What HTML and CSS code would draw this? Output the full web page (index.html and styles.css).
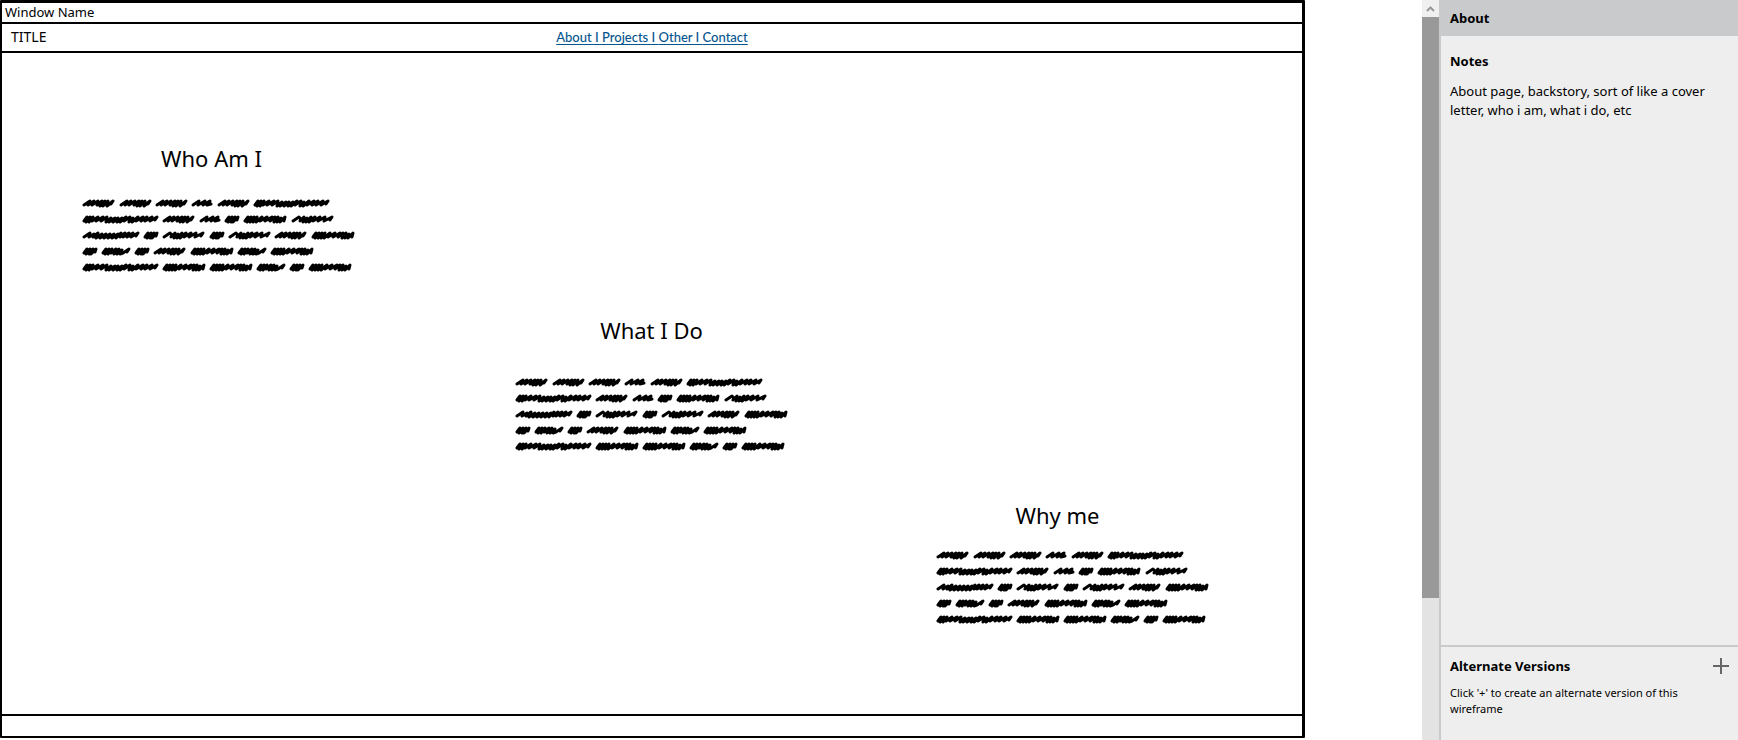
FILE: index.html
```
<!DOCTYPE html>
<html lang="en">
<head>
<meta charset="utf-8">
<title>About</title>
<link rel="stylesheet" href="styles.css">
</head>
<body>
<svg class="defs" aria-hidden="true">
  <defs>
    <path id="w15" d="M2 6 5 2 4 7 8 2 7 7 11 2 9 7 14 2 13 5"/>
    <path id="w21" d="M2 6 8 2 7 6 14 2 12 6 19 2 16 6 20 5"/>
    <path id="w29" d="M2 6 5 2 4 7 8 2 7 7 11 2 10 6 15 2 13 7 18 2 16 7 21 3 19 7 22 6 28 2 26 5"/>
    <path id="w32" d="M2 6 8 2 6 6 12 2 10 6 16 2 15 6 20 2 18 7 23 2 21 7 26 2 25 7 31 2 29 5"/>
    <path id="w42" d="M2 6 8 2 10 4 9 6 13 2 12 7 16 3 15 7 20 2 18 7 24 2 22 6 29 2 27 6 34 2 33 6 41 2 39 5"/>
    <path id="w43" d="M2 6 5 2 4 7 8 2 7 7 11 2 10 7 14 2 13 7 19 2 17 6 24 2 22 6 29 2 27 6 32 2 31 7 35 2 34 7 38 3 37 7 42 2 41 6"/>
    <path id="w57" d="M2 6 8 2 7 6 12 3 11 6 16 2 14 7 20 3 18 7 24 3 22 7 28 3 26 7 32 3 30 7 36 3 34 7 39 2 38 6 43 2 41 6 47 2 45 6 51 2 49 6 56 2 54 5"/>
    <path id="w76" d="M2 6 5 2 4 7 8 2 7 7 11 2 10 6 16 2 14 6 21 2 19 6 25 2 24 7 29 3 27 7 33 3 31 7 36 3 35 7 40 3 38 7 44 2 42 6 48 2 47 7 51 3 50 7 56 2 54 6 61 2 59 6 65 2 63 6 70 2 68 6 75 2 73 5"/>
    <g id="scribble">
      <g transform="translate(0 4)"><use href="#w32"/><use href="#w32" x="37"/><use href="#w32" x="73"/><use href="#w21" x="109"/><use href="#w32" x="135"/><use href="#w76" x="171"/></g>
      <g transform="translate(0 20)"><use href="#w76"/><use href="#w32" x="80"/><use href="#w21" x="117"/><use href="#w15" x="142"/><use href="#w43" x="161"/><use href="#w42" x="209"/></g>
      <g transform="translate(0 36)"><use href="#w57"/><use href="#w15" x="61"/><use href="#w42" x="80"/><use href="#w15" x="127"/><use href="#w42" x="146"/><use href="#w32" x="192"/><use href="#w43" x="229"/></g>
      <g transform="translate(0 52)"><use href="#w15"/><use href="#w29" x="19"/><use href="#w15" x="52"/><use href="#w32" x="71"/><use href="#w43" x="108"/><use href="#w29" x="155"/><use href="#w43" x="188"/></g>
      <g transform="translate(0 68)"><use href="#w76"/><use href="#w43" x="80"/><use href="#w43" x="127"/><use href="#w29" x="174"/><use href="#w15" x="207"/><use href="#w43" x="226"/></g>
    </g>
  </defs>
</svg>
<div class="app">
  <main class="canvas">
    <div class="window">
      <div class="window-name">Window Name</div>
      <header class="header">
        <span class="site-title">TITLE</span>
        <nav class="links"><a href="#about">About I </a><a href="#projects">Projects I </a><a href="#other">Other I </a><a href="#contact">Contact</a></nav>
      </header>
      <div class="content">
        <section class="block who" id="about">
          <h2>Who Am I</h2>
          <svg class="lines" viewBox="0 0 273 80" role="img" aria-label="Placeholder text"><use href="#scribble"/></svg>
        </section>
        <section class="block what">
          <h2>What I Do</h2>
          <svg class="lines" viewBox="0 0 273 80" role="img" aria-label="Placeholder text"><use href="#scribble"/></svg>
        </section>
        <section class="block why">
          <h2>Why me</h2>
          <svg class="lines" viewBox="0 0 273 80" role="img" aria-label="Placeholder text"><use href="#scribble"/></svg>
        </section>
      </div>
      <footer class="footer"></footer>
    </div>
  </main>
  <div class="scrollbar">
    <button class="scroll-up" aria-label="Scroll up"><svg width="9" height="6" viewBox="0 0 9 6"><path d="M1 5 4.500 1.500 8 5"/></svg></button>
    <div class="thumb"></div>
  </div>
  <aside class="sidebar">
    <h1 class="name">About</h1>
    <section class="notes">
      <h3>Notes</h3>
      <p>About page, backstory, sort of like a cover letter, who i am, what i do, etc</p>
    </section>
    <section class="versions">
      <div class="versions-head">
        <h3>Alternate Versions</h3>
        <button class="add" aria-label="Add alternate version"><svg width="16" height="16" viewBox="0 0 16 16"><path d="M8 0V16M0 8H16"/></svg></button>
      </div>
      <p>Click '+' to create an alternate version of this wireframe</p>
    </section>
  </aside>
</div>
</body>
</html>
```
FILE: styles.css
```
* { box-sizing: border-box; }
body { margin: 0; background: #fff; color: #000; font-family: "Noto Sans", sans-serif; }
h1, h2, h3, p { margin: 0; }
button { border: 0; padding: 0; background: none; display: flex; align-items: center; justify-content: center; }
.defs { position: absolute; width: 0; height: 0; }
.app { display: flex; min-height: 100vh; }

.canvas { flex: 1; display: flex; padding: 0 117px 2px 0; }
.window { flex: 1; display: flex; flex-direction: column; border: 2px solid #000; border-top-width: 3px; border-right-width: 3px; border-radius: 1px; }
.window-name { height: 21px; padding-left: 3px; border-bottom: 2px solid #000; font-size: 13px; line-height: 19px; }
.header { display: grid; grid-template-columns: 1fr auto 1fr; height: 29px; border-bottom: 2px solid #000; font-size: 14px; line-height: 25px; }
.site-title { padding-left: 9px; }
.links a { color: #04558f; font-family: Lato, sans-serif; font-size: 13px; font-weight: 500; white-space: pre; text-underline-offset: 2px; }

.content { flex: 1; padding-top: 89px; }
.block { width: 273px; }
.block h2 { font-size: 22px; font-weight: 400; line-height: 32px; text-align: center; }
.lines { display: block; width: 100%; fill: none; stroke: #000; stroke-width: 3; stroke-linecap: round; stroke-linejoin: round; }
.who { margin-left: 80px; }
.who h2 { padding-right: 14px; margin-bottom: 21px; }
.what { margin: 39px 0 0 513px; }
.what h2 { margin-bottom: 28px; }
.why { margin: 45px 0 0 934px; }
.why h2 { padding-right: 30px; margin-bottom: 16px; }
.footer { height: 22px; border-top: 2px solid #000; }

.scrollbar { width: 17px; background: #e3e3e3; }
.scroll-up { width: 17px; height: 17px; background: #f0f0f0; }
.scroll-up svg { fill: none; stroke: #999; stroke-width: 2; }
.thumb { height: 581px; background: #999; }

.sidebar { width: 299px; display: flex; flex-direction: column; border-left: 2px solid #c9cacc; background: #eee; }
.name { height: 36px; padding-left: 9px; background: #c9cacc; font-size: 13px; line-height: 36px; }
.notes { flex: 1; padding: 15px 9px; }
h3 { font-size: 13px; line-height: 20px; }
.notes p { margin-top: 11px; font-size: 13px; line-height: 19px; }
.versions { height: 95px; padding: 9px 9px 0; border-top: 2px solid #c9cacc; }
.versions-head { display: flex; justify-content: space-between; align-items: center; }
.add svg { stroke: #666; stroke-width: 2; }
.versions p { margin-top: 9px; font-size: 11px; line-height: 16px; }
```
